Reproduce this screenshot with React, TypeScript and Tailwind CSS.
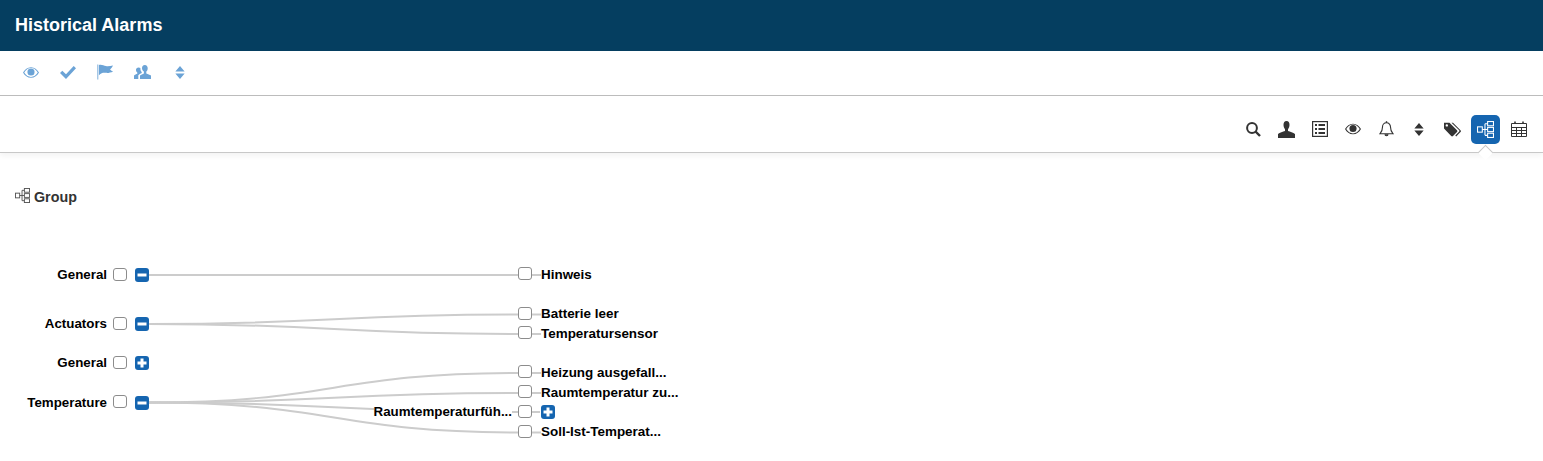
import React from "react";

type IconProps = { className?: string };

const Eye = ({ className }: IconProps) => (
  <svg viewBox="0 0 18 12" className={className} fill="currentColor">
    <path fillRule="evenodd" d="M9 0C5 0 2 2.400 0 6c2 3.600 5 6 9 6s7-2.400 9-6c-2-3.600-5-6-9-6zM9 1c3.200 0 5.800 2 7.600 5-1.800 3-4.400 5-7.600 5S3.200 9 1.400 6C3.200 3 5.800 1 9 1z" />
    <circle cx="9" cy="5.500" r="4" />
  </svg>
);

const Check = ({ className }: IconProps) => (
  <svg viewBox="0 0 16 13" className={className} fill="currentColor">
    <path d="M0 7l2.300-2.300L6 8.200 13.700 0 16 2.300 6 13z" />
  </svg>
);

const Flag = ({ className }: IconProps) => (
  <svg viewBox="0 0 18 16" className={className} fill="currentColor">
    <path d="M0 0h1.500v16H0z" opacity=".6" />
    <path d="M2 .5c3-.8 5 .6 7.500 1.200 2.500.6 5-.4 7.500-.6-.8 1.800-2 3.200-3.200 4.200 1 .8 2.200 1.600 3.200 2.400-3 .8-5 1.600-7.500 1.200C7 8.500 5 8.500 2 11.500z" />
  </svg>
);

const Users = ({ className }: IconProps) => (
  <svg viewBox="0 0 17 14" className={className} fill="currentColor">
    <path d="M10.800 0c1.900 0 2.900 1.400 2.900 3.200 0 1.400-.5 2.600-1.400 3.400v1.800c1.600.6 3.500 1 4.700 2.200V14H6v-3.400c1-1 2.700-1.600 3.900-2.200V6.600C9 5.800 8 4.600 8 3.200 8 1.400 8.900 0 10.800 0z" />
    <path d="M4.600 2.500c.7 0 1.300.2 1.800.6-.2 1.500.3 3 1.300 4v.8C6.400 8.500 5 9.300 4.300 10.200V14H0v-3.400c.8-.8 2.300-1.400 3.300-1.800V7.600C2.500 6.900 2 6 2 5c0-1.500.9-2.500 2.600-2.500z" />
  </svg>
);

const Sort = ({ className }: IconProps) => (
  <svg viewBox="0 0 10 14" className={className} fill="currentColor">
    <path d="M5 0l5 5.800H0zM0 8.200h10L5 14z" />
  </svg>
);

const Search = ({ className }: IconProps) => (
  <svg viewBox="0 0 15 15" className={className} fill="none" stroke="currentColor">
    <circle cx="6" cy="6" r="4.900" strokeWidth="2" />
    <path d="M9.500 9.500L14 14" strokeWidth="2.400" />
  </svg>
);

const User = ({ className }: IconProps) => (
  <svg viewBox="0 0 17 17" className={className} fill="currentColor">
    <path d="M8.500 0c2 0 3 1.600 3 3.800 0 1.800-.6 3.400-1.500 4.400v1.900c2 .8 5.300 1.200 7 3V17H0v-3.900c1.700-1.800 5-2.200 7-3V8.200C6.100 7.200 5.500 5.600 5.500 3.800 5.500 1.600 6.500 0 8.500 0z" />
  </svg>
);

const ListBox = ({ className }: IconProps) => (
  <svg viewBox="0 0 16 16" className={className} fill="none" stroke="currentColor">
    <rect x=".6" y=".6" width="14.800" height="14.800" strokeWidth="1.200" />
    <path d="M3 4h2M3 8h2M3 12h2" strokeWidth="2" />
    <path d="M6.500 4H13M6.500 8H13M6.500 12H13" strokeWidth="2" />
  </svg>
);

const Bell = ({ className }: IconProps) => (
  <svg viewBox="0 0 14 16" className={className} fill="none" stroke="currentColor" strokeWidth="1.100">
    <path d="M7 1.800c-2.600 0-4 1.900-4 4.300 0 3.200-.8 4.800-2.400 6.600h12.800C11.800 10.900 11 9.300 11 6.100c0-2.400-1.400-4.300-4-4.300z" />
    <path d="M7 .2v1.600" strokeWidth="1.400" />
    <path d="M5.500 13.200a1.500 1.500 0 0 0 3 0" fill="currentColor" />
  </svg>
);

const Tags = ({ className }: IconProps) => (
  <svg viewBox="0 0 17 15" className={className} fill="currentColor">
    <path fillRule="evenodd" d="M0 .8h5.500L13 8.300a1.300 1.300 0 0 1 0 1.800l-4 4a1.300 1.300 0 0 1-1.800 0L0 6.500zM2.800 2.200a1.200 1.200 0 1 0 0 2.400 1.200 1.200 0 0 0 0-2.400z" />
    <path d="M7.500.8h1.500l7.500 7.500a1.300 1.300 0 0 1 0 1.800l-4.300 4.300-.9-.9 3.700-3.800a1.300 1.300 0 0 0 0-1.800z" />
  </svg>
);

const Tree = ({ className }: IconProps) => (
  <svg viewBox="0 0 16 16" className={className} fill="none" stroke="currentColor" strokeWidth="1">
    <rect x=".5" y="5.500" width="4.500" height="5" />
    <rect x="10" y=".5" width="5.500" height="4" />
    <rect x="10" y="6" width="5.500" height="4" />
    <rect x="10" y="11.500" width="5.500" height="4" />
    <path d="M5 8h5M7.500 2.500v11M7.500 2.500H10M7.500 13.500H10" />
  </svg>
);

const Calendar = ({ className }: IconProps) => (
  <svg viewBox="0 0 16 16" className={className} fill="none" stroke="currentColor" strokeWidth="1">
    <path d="M.5 2.500h15v13H.5zM.5 6.500h15M.5 9.500h15M.5 12.500h15M5.500 6.500v9M10.500 6.500v9" />
    <path d="M4 .5v2M12 .5v2" strokeWidth="1.600" />
  </svg>
);

const Toggle = ({ minus }: { minus?: boolean }) => (
  <button className="flex h-[14px] w-[14px] shrink-0 items-center justify-center rounded-[3px] bg-[#1565b0]">
    <svg viewBox="0 0 14 14" className="h-[14px] w-[14px]" fill="white">
      <path d="M2.500 5.500h9v3h-9z" />
      {!minus && <path d="M5.500 2.500h3v9h-3z" />}
    </svg>
  </button>
);

const Box = () => (
  <span className="-mt-[2px] h-[13px] w-[14px] shrink-0 rounded-[3px] border border-[#8c8c8c] bg-white" />
);

const ChildBox = () => (
  <span className="-mt-[3px] h-[13px] w-[14px] shrink-0 rounded-[3px] border border-[#8c8c8c] bg-white" />
);

// canvas starts at y=240 in the page, y is the centre line of a node
const parents = [
  { label: "General", y: 35, minus: true },
  { label: "Actuators", y: 84, minus: true },
  { label: "General", y: 123, minus: false },
  { label: "Temperature", y: 162.500, minus: true },
];

const children = [
  { label: "Hinweis", y: 35, from: 35 },
  { label: "Batterie leer", y: 74.500, from: 84 },
  { label: "Temperatursensor", y: 94, from: 84 },
  { label: "Heizung ausgefall...", y: 133, from: 162.500 },
  { label: "Raumtemperatur zu...", y: 153, from: 162.500 },
  { label: "Soll-Ist-Temperat...", y: 192.500, from: 162.500 },
];

const linkPath = (from: number, to: number) =>
  `M149 ${from}C334 ${from} 334 ${to} 518 ${to}`;

function TreeCanvas() {
  return (
    <div className="relative h-[221px] text-[13.33px] font-bold text-black">
      <svg className="absolute top-0 left-0 h-[221px] w-[700px]" fill="none" stroke="#cccccc" strokeWidth="2">
        {children.map((c) => (
          <path key={c.label} d={linkPath(c.from, c.y)} />
        ))}
        <path d={linkPath(162.5, 172)} />
        {children.map((c) => (
          <path key={c.label + "-tail"} d={`M532 ${c.y}H541`} />
        ))}
        <path d="M532 172H540" />
      </svg>

      {parents.map((p) => (
        <div
          key={p.label + p.y}
          className="absolute left-0 flex h-[16px] w-[149px] items-center justify-end whitespace-nowrap"
          style={{ top: p.y - 8 }}
        >
          <span className="mr-[6px]">{p.label}</span>
          <Box />
          <span className="ml-[8px]">
            <Toggle minus={p.minus} />
          </span>
        </div>
      ))}

      {children.map((c) => (
        <div
          key={c.label}
          className="absolute left-[518px] flex h-[16px] items-center gap-[9px] text-[13.45px] whitespace-nowrap"
          style={{ top: c.y - 8 }}
        >
          <ChildBox />
          <span>{c.label}</span>
        </div>
      ))}

      <div className="absolute top-[164px] left-0 flex h-[16px] w-[555px] items-center justify-end whitespace-nowrap">
        <span className="mr-[6px] bg-white">Raumtemperaturfüh...</span>
        <Box />
        <span className="ml-[9px]">
          <Toggle />
        </span>
      </div>
    </div>
  );
}

const topIcons = [
  <Eye className="h-[11px] w-[16px]" />,
  <Check className="h-[13px] w-[16px]" />,
  <Flag className="h-[16px] w-[17px]" />,
  <Users className="h-[14px] w-[17px]" />,
  <Sort className="h-[13px] w-[10px]" />,
];

const filterIcons = [
  <Search className="h-[15px] w-[15px]" />,
  <User className="h-[17px] w-[17px]" />,
  <ListBox className="h-[16px] w-[16px]" />,
  <Eye className="h-[12px] w-[16px]" />,
  <Bell className="h-[16px] w-[15px]" />,
  <Sort className="h-[13px] w-[10px]" />,
  <Tags className="h-[15px] w-[17px]" />,
];

export default function App() {
  return (
    <div className="h-[461px] w-full overflow-hidden bg-white font-['Liberation_Sans',Arial,sans-serif]">
      <header className="flex h-[51px] items-center bg-[#053e60] pl-[15px] text-[18px] font-bold text-white">
        Historical Alarms
      </header>

      <div className="flex h-[45px] items-center border-b border-[#bdbdbd] pb-[2px] pl-[12.500px] text-[#6ba3d6]">
        {topIcons.map((icon, i) => (
          <span key={i} className="flex w-[37.2px] justify-center">
            {icon}
          </span>
        ))}
      </div>

      <div className="relative flex h-[57px] items-center justify-end border-b border-[#c8c8c8] pt-[10px] pr-[7.500px] text-[#333333] shadow-[0_3px_6px_rgba(0,0,0,0.05)]">
        {filterIcons.map((icon, i) => (
          <span key={i} className="flex w-[33.2px] justify-center">
            {icon}
          </span>
        ))}
        <span className="relative flex w-[33.2px] justify-center">
          <span className="flex h-[29px] w-[29px] items-center justify-center rounded-[5px] bg-[#1565b0] text-white">
            <Tree className="h-[17px] w-[17px]" />
          </span>
          <span className="absolute top-[32px] left-[11px] h-[11px] w-[11px] rotate-45 border-t border-l border-[#c8c8c8] bg-white" />
        </span>
        <span className="flex w-[33.2px] justify-center">
          <Calendar className="h-[16px] w-[16px]" />
        </span>
      </div>

      <div className="flex h-[87px] items-start gap-[4px] pt-[34px] pl-[15px] text-[14.3px] font-bold text-[#333333]">
        <span className="mt-[1px] text-[#555555]">
          <Tree className="h-[15px] w-[15px]" />
        </span>
        Group
      </div>

      <TreeCanvas />
    </div>
  );
}
